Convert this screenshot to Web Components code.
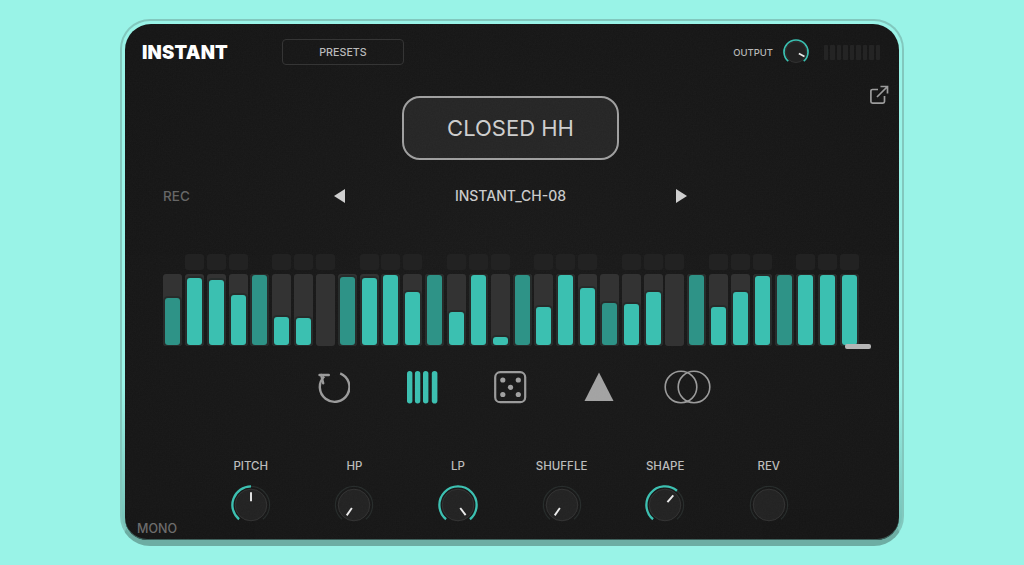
<!DOCTYPE html>
<html>
<head>
<meta charset="utf-8">
<title>Instant</title>
<style>
    html, body { margin: 0; height: 100%; }
    body {
        background: #99f3e7;
        font-family: "Inter", "Liberation Sans", sans-serif;
        overflow: hidden;
    }
</style>
</head>
<body>
<plugin-frame>
    <top-bar></top-bar>
    <sample-title>CLOSED HH</sample-title>
    <sample-nav rec="REC">INSTANT_CH-08</sample-nav>
    <step-seq></step-seq>
    <tool-row></tool-row>
    <knob-row></knob-row>
</plugin-frame>

<script>
(function () {
    const TEAL = "#3bc0b1";
    const polar = (cx, cy, r, deg) => {
        const a = (deg - 90) * Math.PI / 180;
        return [cx + r * Math.cos(a), cy + r * Math.sin(a)];
    };
    const arc = (cx, cy, r, from, to) => {
        const [x1, y1] = polar(cx, cy, r, from);
        const [x2, y2] = polar(cx, cy, r, to);
        const large = to - from > 180 ? 1 : 0;
        return `M${x1.toFixed(2)} ${y1.toFixed(2)}A${r} ${r} 0 ${large} 1 ${x2.toFixed(2)} ${y2.toFixed(2)}`;
    };

    class PluginFrame extends HTMLElement {
        constructor() {
            super();
            this.attachShadow({ mode: "open" }).innerHTML = `
                <style>
                    :host {
                        display: block;
                        box-sizing: border-box;
                        width: 784px;
                        height: 527px;
                        margin: 19px 0 0 120px;
                        padding: 3px 3px 0;
                        border: 2px solid #82c8be;
                        border-bottom: 6px solid #6dada3;
                        border-radius: 30px;
                        background: linear-gradient(#99f3e7 70%, #74bdb3);
                    }
                    .panel {
                        position: relative;
                        display: flex;
                        flex-direction: column;
                        height: 100%;
                        overflow: hidden;
                        border-radius: 26px 26px 22px 22px;
                        background: radial-gradient(ellipse at 50% 45%, #1a1a1a, #161616 85%);
                        box-shadow: inset 0 -1px 0 #3c5f5a;
                    }
                    svg.grain {
                        position: absolute;
                        inset: 0;
                        width: 100%;
                        height: 100%;
                        opacity: .03;
                        pointer-events: none;
                    }
                </style>
                <div class="panel">
                    <svg class="grain">
                        <filter id="n"><feTurbulence type="fractalNoise" baseFrequency=".7" numOctaves="2"/><feColorMatrix type="saturate" values="0"/></filter>
                        <rect width="100%" height="100%" filter="url(#n)"/>
                    </svg>
                    <slot></slot>
                </div>
            `;
        }
    }

    class TopBar extends HTMLElement {
        constructor() {
            super();
            const meter = "<i></i>".repeat(9);
            this.attachShadow({ mode: "open" }).innerHTML = `
                <style>
                    :host {
                        display: flex;
                        align-items: center;
                        height: 26px;
                        margin-top: 15px;
                        padding: 0 19px 0 17px;
                        position: relative;
                    }
                    .logo {
                        width: 140px;
                        color: #fff;
                        font-size: 18.5px;
                        font-weight: 900;
                        letter-spacing: .2px;
                    }
                    .presets {
                        display: flex;
                        align-items: center;
                        justify-content: center;
                        box-sizing: border-box;
                        width: 122px;
                        height: 26px;
                        border: 1px solid #353535;
                        border-radius: 4px;
                        color: #bbb;
                        font-size: 10.7px;
                        font-weight: 500;
                    }
                    .out {
                        display: flex;
                        align-items: center;
                        margin-left: auto;
                    }
                    .out span {
                        color: #b8b8b8;
                        font-size: 9.5px;
                        font-weight: 500;
                        margin-right: 9.5px;
                    }
                    .meter {
                        display: flex;
                        gap: 2px;
                        margin-left: 15px;
                    }
                    .meter i {
                        width: 4.5px;
                        height: 15px;
                        background: #242424;
                        border-radius: 1px;
                    }
                </style>
                <div class="logo">INSTANT</div>
                <div class="presets">PRESETS</div>
                <div class="out">
                    <span>OUTPUT</span>
                    <dial-knob size="26" r="12" angle="118" from="-140" to="140" thin></dial-knob>
                    <div class="meter">${meter}</div>
                </div>
            `;
        }
    }

    class SampleTitle extends HTMLElement {
        constructor() {
            super();
            this.attachShadow({ mode: "open" }).innerHTML = `
                <style>
                    :host {
                        display: grid;
                        grid-template-columns: 277px 217px 1fr;
                        height: 75px;
                        margin-top: 20px;
                    }
                    .title {
                        grid-column: 2;
                        align-self: end;
                        display: flex;
                        align-items: center;
                        justify-content: center;
                        box-sizing: border-box;
                        height: 64px;
                        border: 2.6px solid #a0a0a0;
                        border-radius: 18px;
                        background: #262626;
                        color: #cfcfcf;
                        font-size: 22px;
                        font-weight: 400;
                    }
                    svg {
                        grid-column: 3;
                        justify-self: end;
                        margin-right: 10px;
                    }
                </style>
                <div class="title"><slot></slot></div>
                <svg width="20" height="20" viewBox="0 0 20 20" fill="none" stroke="#9c9c9c" stroke-width="1.7">
                    <path d="M9 4.5H3.5a1.6 1.6 0 0 0-1.6 1.6v10.4a1.6 1.6 0 0 0 1.6 1.6h10.4a1.6 1.6 0 0 0 1.6-1.6V11"/>
                    <path d="M8 12L18.5 1.5M11.5 1.5h7v7"/>
                </svg>
            `;
        }
    }

    class SampleNav extends HTMLElement {
        constructor() {
            super();
            const rec = this.getAttribute("rec") || "";
            this.attachShadow({ mode: "open" }).innerHTML = `
                <style>
                    :host {
                        display: grid;
                        grid-template-columns: 171px 12px 1fr 12px;
                        align-items: center;
                        width: 524px;
                        height: 22px;
                        margin: 25px 0 0 38px;
                    }
                    .rec {
                        color: #666;
                        font-size: 13.5px;
                        font-weight: 500;
                    }
                    .name {
                        text-align: center;
                        color: #cbcbcb;
                        font-size: 14px;
                        font-weight: 500;
                        margin-top: -1px;
                    }
                    svg { display: block; }
                </style>
                <div class="rec">${rec}</div>
                <svg width="12" height="14" viewBox="0 0 12 14"><path d="M11 0v14L0 7z" fill="#d0d0d0"/></svg>
                <div class="name"><slot></slot></div>
                <svg width="12" height="14" viewBox="0 0 12 14"><path d="M1 0v14l11-7z" fill="#d0d0d0"/></svg>
            `;
        }
    }

    class StepSeq extends HTMLElement {
        constructor() {
            super();
            // bar height in px for each step, negative means the darker (accented) colour
            const heights = [-47, 67, 65, 50, -70, 28, 27, 0, -68, 67, 70, 53, -70, 33, 70, 8,
                -70, 38, 70, 57, -42, 41, 53, 0, -70, 38, 53, 69, -70, 70, 70, 70];
            const steps = heights.map((h, i) => `
                <div class="step">
                    <div class="tile ${i % 4 === 0 ? "off" : ""}"></div>
                    <div class="track">
                        ${h ? `<div class="bar ${h < 0 ? "dim" : ""}" style="height:${Math.abs(h)}px"></div>` : ""}
                    </div>
                </div>`).join("");
            this.attachShadow({ mode: "open" }).innerHTML = `
                <style>
                    :host {
                        display: block;
                        position: relative;
                        width: 697px;
                        margin: 47px 0 0 38px;
                    }
                    .steps {
                        display: grid;
                        grid-template-columns: repeat(32, 19px);
                        column-gap: 2.85px;
                    }
                    .step {
                        display: flex;
                        flex-direction: column;
                        gap: 4px;
                    }
                    .tile {
                        height: 16px;
                        border-radius: 3px;
                        background: #222;
                    }
                    .tile.off { visibility: hidden; }
                    .track {
                        display: flex;
                        align-items: flex-end;
                        box-sizing: border-box;
                        height: 72px;
                        padding: 1px 2px;
                        border-radius: 3px;
                        background: #333;
                        overflow: hidden;
                    }
                    .bar {
                        flex: 1;
                        border-radius: 3px;
                        background: ${TEAL};
                        box-shadow: 0 0 0 2px #272c2b;
                    }
                    .bar.dim { background: #2e9387; }
                    .handle {
                        position: absolute;
                        left: 682px;
                        top: 90px;
                        width: 26px;
                        height: 5px;
                        border-radius: 2px;
                        background: #b5b5b5;
                    }
                </style>
                <div class="steps">${steps}</div>
                <div class="handle"></div>
            `;
        }
    }

    class ToolRow extends HTMLElement {
        constructor() {
            super();
            this.attachShadow({ mode: "open" }).innerHTML = `
                <style>
                    :host {
                        display: grid;
                        grid-template-columns: repeat(5, 88.5px);
                        justify-content: center;
                        justify-items: center;
                        align-items: center;
                        height: 34px;
                        margin-top: 24px;
                        padding-right: 3px;
                    }
                    svg { display: block; }
                </style>
                <svg width="32" height="34" viewBox="0 0 32 34" fill="none" stroke="#9b9b9b" stroke-width="2.4">
                    <path d="M22.2 3.3A14.8 14.8 0 1 1 6.2 6.5"/>
                    <path d="M1.5 5H10.8" stroke-linecap="round"/>
                    <path d="M3.2 5L5.2 13.3" stroke-linecap="round"/>
                </svg>
                <svg width="31" height="33" viewBox="0 0 31 33" fill="${TEAL}">
                    <rect x="0" width="5.4" height="32.5" rx="2.7"/>
                    <rect x="7.9" width="5.4" height="32.5" rx="2.7"/>
                    <rect x="16" width="5.4" height="32.5" rx="2.7"/>
                    <rect x="24.8" width="5.6" height="32.5" rx="2.8"/>
                </svg>
                <svg width="33" height="33" viewBox="0 0 33 33" fill="#a0a0a0">
                    <rect x="1.2" y="1.2" width="30" height="30" rx="5" fill="none" stroke="#9b9b9b" stroke-width="2.2"/>
                    <circle cx="8.8" cy="9" r="2.6"/><circle cx="24.3" cy="9" r="2.6"/>
                    <circle cx="16.5" cy="16.3" r="2.6"/>
                    <circle cx="8.8" cy="23.5" r="2.6"/><circle cx="24.3" cy="23.5" r="2.6"/>
                </svg>
                <svg width="30" height="30" viewBox="0 0 30 30"><path d="M15 0.5L29.5 29H0.5z" fill="#a3a3a3"/></svg>
                <svg width="47" height="34" viewBox="0 0 47 34" fill="none" stroke="#9b9b9b" stroke-width="1.6">
                    <circle cx="17" cy="17" r="15.8"/>
                    <circle cx="30" cy="17" r="15.8"/>
                </svg>
            `;
        }
    }

    class DialKnob extends HTMLElement {
        connectedCallback() {
            const size = +this.getAttribute("size") || 40;
            const r = +this.getAttribute("r") || 18;
            const thin = this.hasAttribute("thin");
            const c = size / 2;
            const from = this.getAttribute("from");
            const to = this.getAttribute("to");
            const angle = this.getAttribute("angle");
            const face = r - (thin ? 1.5 : 2.8);
            const track = thin ? "" : `<path d="${arc(c, c, r, -140, 140)}" stroke="#262b2a" stroke-width="1.2" fill="none"/>`;
            const value = from !== null
                ? `<path d="${arc(c, c, r, +from, +to)}" stroke="${TEAL}" stroke-width="${thin ? 1.7 : 2.3}" fill="none"/>`
                : "";
            let pointer = "";
            if (angle !== null) {
                const [x1, y1] = polar(c, c, r * (thin ? .27 : .2), +angle);
                const [x2, y2] = polar(c, c, r * (thin ? .8 : .68), +angle);
                pointer = `<line x1="${x1}" y1="${y1}" x2="${x2}" y2="${y2}" stroke="#ececec" stroke-width="${thin ? 1.8 : 1.9}"/>`;
            }
            this.attachShadow({ mode: "open" }).innerHTML = `
                <style>
                    :host { display: block; width: ${size}px; height: ${size}px; }
                    svg { display: block; }
                </style>
                <svg width="${size}" height="${size}" viewBox="0 0 ${size} ${size}">
                    <circle cx="${c}" cy="${c}" r="${face}" fill="#222" stroke="#323232" stroke-width="1"/>
                    ${track}${value}${pointer}
                </svg>
            `;
        }
    }

    class KnobCell extends HTMLElement {
        constructor() {
            super();
            const label = this.getAttribute("label");
            const attrs = ["angle", "from", "to"]
                .filter((a) => this.hasAttribute(a))
                .map((a) => `${a}="${this.getAttribute(a)}"`).join(" ");
            this.attachShadow({ mode: "open" }).innerHTML = `
                <style>
                    :host {
                        display: flex;
                        flex-direction: column;
                        align-items: center;
                        gap: 12px;
                    }
                    span {
                        color: #bdbdbd;
                        font-size: 11.5px;
                        font-weight: 500;
                        line-height: 14px;
                    }
                </style>
                <span>${label}</span>
                <dial-knob size="40" r="18.6" ${attrs}></dial-knob>
            `;
        }
    }

    class KnobRow extends HTMLElement {
        constructor() {
            super();
            this.attachShadow({ mode: "open" }).innerHTML = `
                <style>
                    :host {
                        display: grid;
                        grid-template-columns: 74px repeat(6, 103.6px);
                        margin-top: 55px;
                    }
                    .mono {
                        align-self: end;
                        padding-left: 12px;
                        color: #6c6c6c;
                        font-size: 12.5px;
                        font-weight: 500;
                        line-height: 14px;
                        margin-bottom: -11px;
                    }
                </style>
                <div class="mono">MONO</div>
                <knob-cell label="PITCH" angle="0" from="-140" to="0"></knob-cell>
                <knob-cell label="HP" angle="-145"></knob-cell>
                <knob-cell label="LP" angle="143" from="-140" to="140"></knob-cell>
                <knob-cell label="SHUFFLE" angle="-145"></knob-cell>
                <knob-cell label="SHAPE" angle="41" from="-140" to="40"></knob-cell>
                <knob-cell label="REV"></knob-cell>
            `;
        }
    }

    customElements.define("dial-knob", DialKnob);
    customElements.define("knob-cell", KnobCell);
    customElements.define("plugin-frame", PluginFrame);
    customElements.define("top-bar", TopBar);
    customElements.define("sample-title", SampleTitle);
    customElements.define("sample-nav", SampleNav);
    customElements.define("step-seq", StepSeq);
    customElements.define("tool-row", ToolRow);
    customElements.define("knob-row", KnobRow);
})();
</script>
</body>
</html>
